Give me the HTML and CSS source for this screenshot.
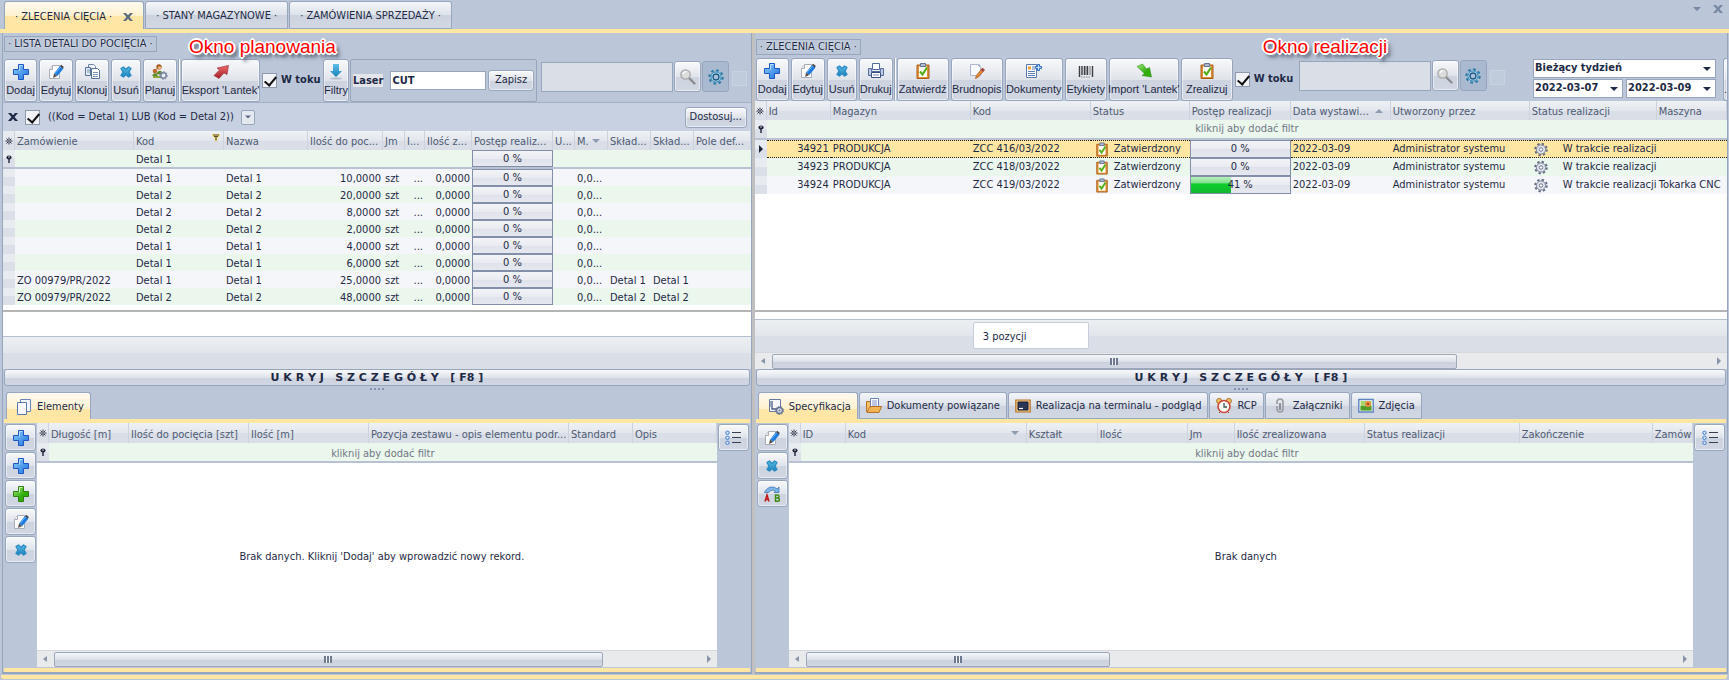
FILE: index.html
```html
<!DOCTYPE html>
<html lang="pl">
<head>
<meta charset="utf-8">
<title>Zlecenia cięcia</title>
<link rel="stylesheet" href="styles.css">
</head>
<body>
<svg class="sprite" aria-hidden="true">
  <defs>
    <linearGradient id="g-blue" x1="0" y1="0" x2="1" y2="1"><stop offset="0" stop-color="#8fd0f8"/><stop offset="1" stop-color="#1b6fe0"/></linearGradient>
    <linearGradient id="g-green" x1="0" y1="0" x2="1" y2="1"><stop offset="0" stop-color="#a5ea7c"/><stop offset=".6" stop-color="#2fae0c"/></linearGradient>
    <linearGradient id="g-cyan" x1="0" y1="0" x2="0" y2="1"><stop offset="0" stop-color="#5cc0ea"/><stop offset="1" stop-color="#1a7fb8"/></linearGradient>
    <linearGradient id="g-red" x1="0" y1="0" x2="0" y2="1"><stop offset="0" stop-color="#f06a6a"/><stop offset="1" stop-color="#a51f28"/></linearGradient>
  </defs>
  <symbol id="plus" viewBox="0 0 16 16"><path d="M5.500.5h5v5h5v5h-5v5h-5v-5h-5v-5h5z" fill="url(#g-blue)" stroke="#1c55c4"/><path d="M6.500 6.500v-5h3" fill="none" stroke="#b5e0fb"/></symbol>
  <symbol id="plus-green" viewBox="0 0 16 16"><path d="M5.500.5h5v5h5v5h-5v5h-5v-5h-5v-5h5z" fill="url(#g-green)" stroke="#2c7f10"/><path d="M6.500 6.500v-5h3" fill="none" stroke="#d2f7bf"/></symbol>
  <symbol id="edit" viewBox="0 0 16 16"><path d="M4.500 1.500h7v13h-10v-9z" fill="#fdfdfd" stroke="#a9adb5"/><path d="M1.500 5.500h3v-4" fill="#e6e8ec" stroke="#a9adb5"/><path d="M6 9.500 12 2l3.500 2.500-6.200 7.500z" fill="#1d7ae0"/><path d="M7 9.500 13 2.600" stroke="#6bb8fa"/><path d="m12 2 1.200-1.200 2.600 2.200-1 1.600z" fill="#47443f"/><path d="m6 9.500 3.300 2.500L5 14z" fill="#55514c"/></symbol>
  <symbol id="clone" viewBox="0 0 16 16"><path d="M4.500.5h5l2 2v8h-7z" fill="#f4f7fb" stroke="#6b86aa"/><path d="M1.500 3.500h5v8h-5z" fill="#e4ebf4" stroke="#56749c"/><path d="M7.500 4.500h6l2 2v8h-8z" fill="#fff" stroke="#56749c"/><path d="M9 8.500h5M9 10.500h5M9 12.500h5M3 6h3M3 8h3" stroke="#7793b8"/></symbol>
  <symbol id="cross" viewBox="0 0 16 16"><path d="M3 4.500 5.500 3 8 5.500 10.500 3 13 4.500 11 8l2 3.500-2.500 1.500L8 10.500 5.500 13 3 11.500 5 8z" fill="url(#g-cyan)" stroke="#2a8bc4" stroke-width="1.400" stroke-linejoin="round"/></symbol>
  <symbol id="plan" viewBox="0 0 16 16"><circle cx="7" cy="3" r="2.700" fill="#a55a22"/><circle cx="7.500" cy="4" r="1.800" fill="#eab57c"/><circle cx="3" cy="7" r="2.300" fill="#bf6a28"/><path d="M0 12q3-6 6 0zM4 10q4-7 8 1z" fill="#5d8a2c"/><path d="M1 12h8v2H1z" fill="#8aa636"/><circle cx="11.500" cy="11.500" r="2.700" fill="#e8ebf1" stroke="#77839c" stroke-width="1.500"/><circle cx="11.500" cy="11.500" r="4" fill="none" stroke="#8a95ab" stroke-dasharray="1.500 1.500"/></symbol>
  <symbol id="export" viewBox="0 0 16 16"><path d="M15.500 1.500 14 10.500l-3-1.500-5 5.500-5-3L6.500 6 4 4z" fill="url(#g-red)" stroke="#8f2a32" stroke-width=".6"/></symbol>
  <symbol id="import" viewBox="0 0 16 16"><path d="M1 3.500 6.500 1l4 5 3-1.500 2 9.500-9.500-1.500 2.500-2z" fill="url(#g-green)" stroke="#3b8f1d" stroke-width=".6"/></symbol>
  <symbol id="down" viewBox="0 0 16 16"><ellipse cx="8" cy="14.500" rx="6" ry="1" fill="#b5bccb"/><path d="M5 0h6v7h3l-6 6-6-6h3z" fill="url(#g-cyan)"/></symbol>
  <symbol id="search" viewBox="0 0 16 16"><path d="m9 9 5.500 5.500" stroke="#8b8d92" stroke-width="2.400" stroke-linecap="round"/><circle cx="5.500" cy="5.500" r="4.700" fill="#dcdcdc" stroke="#a9a9a9" stroke-width="1.300"/><path d="M3 5q1-2.500 3.500-2.500" fill="none" stroke="#fff" stroke-width="1.200"/></symbol>
  <symbol id="cog-blue" viewBox="0 0 16 16"><circle cx="8" cy="8" r="6.700" fill="none" stroke="#2478a5" stroke-width="2" stroke-dasharray="2.600 2.660"/><circle cx="8" cy="8" r="5" fill="#d4eff9" stroke="#2b86b5"/><circle cx="8" cy="8" r="3" fill="#aebfd8" stroke="#1a5a88" stroke-width="1.400"/></symbol>
  <symbol id="cog-gray" viewBox="0 0 16 16"><circle cx="8" cy="8" r="6.600" fill="none" stroke="#606a82" stroke-width="2.200" stroke-dasharray="2.600 2.580"/><circle cx="8" cy="8" r="5.200" fill="#e3e6ee" stroke="#69738c"/><circle cx="8" cy="8" r="2" fill="#fff" stroke="#59637c"/></symbol>
  <symbol id="print" viewBox="0 0 16 16"><path d="M4.500.5h7v6h-7z" fill="#fff" stroke="#536a9c"/><path d="M.5 5.500h3v3h9v-3h3v7H.5z" fill="#c2cde3" stroke="#536a9c"/><path d="M3.500 9.500h9v5h-9z" fill="#fff" stroke="#39507f"/><path d="M5 12h6" stroke="#7388b6"/></symbol>
  <symbol id="clip" viewBox="0 0 16 16"><path d="M2 2h12v13.500H2z" fill="#e08f35" stroke="#a95e18"/><path d="M4 3.500h8v10.500H4z" fill="#fffdf6"/><path d="M5.500.5h5v3h-5z" fill="#aebbd0" stroke="#647592"/><path d="m5 8.500 2.500 3L12 4.500" fill="none" stroke="#55ae1c" stroke-width="2.200"/></symbol>
  <symbol id="draft" viewBox="0 0 16 16"><path d="M1.500 1.500h7l3 3v8h-10z" fill="#f8f9fd" stroke="#b0b7cc"/><path d="m13.500 5 2 2-6 7-3 1.500.8-3z" fill="#e08a3a" stroke="#a35320" stroke-width=".7"/><path d="m13.500 5 2 2-1.500 1.800-2.200-1.800z" fill="#9c3f4e"/><path d="m9.500 1 2 2.500" stroke="#8aa0cc"/></symbol>
  <symbol id="docs" viewBox="0 0 16 16"><path d="M.5 1.500h10v13H.5z" fill="#fff" stroke="#5a78b0"/><path d="M2 3.500h3v3H2z" fill="#f0a030"/><path d="M6 4h3M6 6h3M2 8.500h7M2 10.500h7M2 12.500h7" stroke="#5d7fc0"/><path d="M11.500 1.500h2v2h2v2h-2v2h-2v-2h-2v-2h2z" fill="#bfe0fa" stroke="#2f67c0"/></symbol>
  <symbol id="bars" viewBox="0 0 16 16"><path d="M1.500 3v11M4 3v9M6.500 3v9M9.500 3v9M14.500 3v11" stroke="#3c3c44" stroke-width="1.400"/><path d="M12 3v9M8 3v9" stroke="#3c3c44" stroke-width=".7"/><path d="M3 14h10" stroke="#888" stroke-dasharray="1.500 1"/></symbol>
  <symbol id="pages" viewBox="0 0 16 16"><path d="M4.500.5h10v12h-10z" fill="#f2f5fc" stroke="#6c84b8"/><path d="M1.500 3.500h9v12h-9z" fill="#fdfdff" stroke="#5c76ad"/></symbol>
  <symbol id="spec" viewBox="0 0 16 16"><path d="M1.500.5h11v12h-11z" fill="#f6f8fc" stroke="#6678a0"/><path d="M4 2v8h6" fill="none" stroke="#4a5c86" stroke-width="1.300"/><path d="M2 3h1M2 5h1M2 7h1" stroke="#4a5c86"/><circle cx="11.500" cy="11.500" r="3" fill="#dfe4ef" stroke="#67748f" stroke-width="1.400"/><circle cx="11.500" cy="11.500" r="4" fill="none" stroke="#67748f" stroke-dasharray="1.400 1.400"/><circle cx="11.500" cy="11.500" r="1" fill="#67748f"/></symbol>
  <symbol id="folder" viewBox="0 0 16 16"><path d="M.5 3.500h4v10h-4z" fill="#f3c066" stroke="#b5712a"/><path d="M4.500.5h8v10h-8z" fill="#fff" stroke="#6b82b8"/><path d="M6 3h5M6 5h5M6 7h5" stroke="#7a93c8"/><path d="m1 14.500 3-6h11.500l-2.500 6z" fill="#f2b452" stroke="#b5712a"/></symbol>
  <symbol id="screen" viewBox="0 0 16 16"><path d="M.8 2h14.400v12H.8z" fill="#f3c987" stroke="#b9752b" stroke-width="1.200"/><path d="M3 4h10v8H3z" fill="#2b3554" stroke="#16203c"/><path d="M4 10.500h4" stroke="#fff" stroke-width="1.200"/></symbol>
  <symbol id="clock" viewBox="0 0 16 16"><circle cx="3.200" cy="3" r="2.600" fill="#f0c060" stroke="#a8762c"/><circle cx="12.800" cy="3" r="2.600" fill="#f0c060" stroke="#a8762c"/><path d="m3 15 2-2M13 15l-2-2" stroke="#a33"/><circle cx="8" cy="8.500" r="6" fill="#fbfbf5" stroke="#c8463c" stroke-width="1.600"/><path d="M8 5v4h3" fill="none" stroke="#3d5a55" stroke-width="1.300"/></symbol>
  <symbol id="paperclip" viewBox="0 0 16 16"><path d="M5 6V4a3 3 0 0 1 6 0v7a3 3 0 0 1-6 0V8" fill="none" stroke="#9b9da2" stroke-width="1.700"/><path d="M8 5v7" stroke="#7d7f85" stroke-width="1.700"/></symbol>
  <symbol id="photo" viewBox="0 0 16 16"><path d="M.8 1.500h14.400v12.500H.8z" fill="#fff" stroke="#5d83c0" stroke-width="1.400"/><path d="M2.500 3h11v9.500h-11z" fill="#a8d66e"/><path d="M2.500 8h11v4.500h-11z" fill="#4f9e2c"/><circle cx="10" cy="6" r="3" fill="#e98b3c"/><circle cx="10" cy="6" r="1" fill="#8b3a22"/></symbol>
  <symbol id="list" viewBox="0 0 16 16"><path d="M7 2.500h9M7 7.500h9M7 12.500h9" stroke="#3a3f4d" stroke-width="1.200"/><circle cx="2.500" cy="2.800" r="1.700" fill="#d4e6fb" stroke="#3f7bd0"/><circle cx="2.500" cy="7.800" r="1.700" fill="#d4e6fb" stroke="#3f7bd0"/><circle cx="2.500" cy="12.800" r="1.700" fill="#d4e6fb" stroke="#3f7bd0"/></symbol>
  <symbol id="swap" viewBox="0 0 16 16"><path d="M.5 6.500Q3 1 8 1q3 0 5 2l2-2v5.500h-5l1.500-1.500Q8 2.500 4.500 6.500z" fill="#7fb6e8" stroke="#3f73b0" stroke-width=".8"/><path d="m1 15.500 2-6.500 2 6.500M1.700 13.500h2.600" fill="none" stroke="#c01818" stroke-width="1.500"/><path d="M11.500 9h2q1.500 0 1.500 1.500T13.500 12q2 0 2 1.600t-2 1.600h-2zM11.500 12h2" fill="none" stroke="#3d8a12" stroke-width="1.400"/></symbol>
  <symbol id="star" viewBox="0 0 8 8"><path d="M4 .5v7M.5 4h7M1.500 1.500l5 5M6.500 1.500l-5 5" stroke="#1e2438" stroke-width=".9"/><circle cx="4" cy="4" r=".8" fill="#dfe3ec"/></symbol>
  <symbol id="pin" viewBox="0 0 8 8"><ellipse cx="4" cy="2.500" rx="2.600" ry="1.900" fill="#1e2438"/><path d="M4 3v5" stroke="#1e2438" stroke-width="1.400"/><path d="M3 2h2" stroke="#fff" stroke-width=".8"/></symbol>
  <symbol id="funnel" viewBox="0 0 8 8"><path d="M0 1h8v2L5.500 5v3h-3V5L0 3z" fill="#f3dc7e"/><path d="M1 2h6M2 3.500h4M4 3v4.500" stroke="#55502f" stroke-width="1.100"/></symbol>
  <symbol id="tri-down" viewBox="0 0 8 8"><path d="M0 2h8L4 6z"/></symbol>
  <symbol id="tri-up" viewBox="0 0 8 8"><path d="M0 6h8L4 2z"/></symbol>
  <symbol id="tri-left" viewBox="0 0 8 8"><path d="M6 1v6L2 4z"/></symbol>
  <symbol id="tri-right" viewBox="0 0 8 8"><path d="M2 0v8l4-4z"/></symbol>
  <symbol id="close" viewBox="0 0 10 8"><path d="M0 0h3l2 2.300L7 0h3L6.500 4 10 8H7L5 5.700 3 8H0l3.500-4z"/></symbol>
</svg>

<header class="doc-tabs">
  <button class="doc-tab doc-tab--active">· ZLECENIA CIĘCIA · <svg class="ic8 ic10"><use href="#close"/></svg></button>
  <button class="doc-tab">· STANY MAGAZYNOWE ·</button>
  <button class="doc-tab">· ZAMÓWIENIA SPRZEDAŻY ·</button>
  <div class="doc-tabs__tools"><svg class="ic8"><use href="#tri-down"/></svg><svg class="ic8 ic10"><use href="#close"/></svg></div>
</header>

<main class="panes">
  <section class="pane pane--left">
    <div class="pane__title"><h2>· LISTA DETALI DO POCIĘCIA ·</h2></div>
    <strong class="note">Okno planowania</strong>
    <div class="toolbar toolbar--lined">
      <button class="tool w33"><svg><use href="#plus"/></svg>Dodaj</button>
      <button class="tool w34"><svg><use href="#edit"/></svg>Edytuj</button>
      <button class="tool w34"><svg><use href="#clone"/></svg>Klonuj</button>
      <button class="tool w30"><svg><use href="#cross"/></svg>Usuń</button>
      <button class="tool w34"><svg><use href="#plan"/></svg>Planuj</button>
      <i class="sep"></i>
      <button class="tool w79"><svg><use href="#export"/></svg>Eksport 'Lantek'</button>
      <label class="check check--toku"><input type="checkbox" checked><b>W toku</b></label>
      <button class="tool w26"><svg><use href="#down"/></svg>Filtry</button>
      <div class="laser">
        <label for="laser">Laser</label>
        <input id="laser" class="field" value="CUT">
        <button class="btn">Zapisz</button>
      </div>
      <input class="field field--search" aria-label="Szukaj">
      <button class="icon-btn" aria-label="Szukaj"><svg><use href="#search"/></svg></button>
      <button class="icon-btn icon-btn--on" aria-label="Ustawienia"><svg><use href="#cog-blue"/></svg></button>
      <i class="ghost"></i>
    </div>
    <div class="filterbar">
      <button class="plain" aria-label="Usuń filtr"><svg class="ic8 ic10"><use href="#close"/></svg></button>
      <label class="check"><input type="checkbox" checked><span>((Kod = Detal 1) LUB (Kod = Detal 2))</span></label>
      <button class="drop" aria-label="Rozwiń"><svg class="ic8"><use href="#tri-down"/></svg></button>
      <button class="btn filterbar__custom">Dostosuj...</button>
    </div>
    <div class="grid-area grid-area--left">
      <table class="grid">
        <colgroup><col class="c12"><col class="c119"><col class="c90"><col class="c84"><col class="c75"><col class="c22"><col class="c20"><col class="c47"><col class="c81"><col class="c22"><col class="c33"><col class="c43"><col class="c43"><col></colgroup>
        <thead>
          <tr><th class="ind"><svg><use href="#star"/></svg></th><th>Zamówienie</th><th>Kod<svg class="th-ic th-ic--top"><use href="#funnel"/></svg></th><th>Nazwa</th><th>Ilość do poc...</th><th>Jm</th><th>I...</th><th>Ilość z...</th><th>Postęp realiz...</th><th>U...</th><th>M.<svg class="th-ic"><use href="#tri-down"/></svg></th><th>Skład...</th><th>Skład...</th><th>Pole def...</th></tr>
        </thead>
        <tbody>
          <tr class="filter"><td class="ind"><svg><use href="#pin"/></svg></td><td></td><td>Detal 1</td><td></td><td></td><td></td><td></td><td></td><td class="bar"><div>0 %</div></td><td></td><td></td><td></td><td></td><td></td></tr>
          <tr><td class="ind"></td><td></td><td>Detal 1</td><td>Detal 1</td><td class="num">10,0000</td><td>szt</td><td class="num">...</td><td class="num">0,0000</td><td class="bar"><div>0 %</div></td><td></td><td>0,0...</td><td></td><td></td><td></td></tr>
          <tr class="alt"><td class="ind"></td><td></td><td>Detal 2</td><td>Detal 2</td><td class="num">20,0000</td><td>szt</td><td class="num">...</td><td class="num">0,0000</td><td class="bar"><div>0 %</div></td><td></td><td>0,0...</td><td></td><td></td><td></td></tr>
          <tr><td class="ind"></td><td></td><td>Detal 2</td><td>Detal 2</td><td class="num">8,0000</td><td>szt</td><td class="num">...</td><td class="num">0,0000</td><td class="bar"><div>0 %</div></td><td></td><td>0,0...</td><td></td><td></td><td></td></tr>
          <tr class="alt"><td class="ind"></td><td></td><td>Detal 2</td><td>Detal 2</td><td class="num">2,0000</td><td>szt</td><td class="num">...</td><td class="num">0,0000</td><td class="bar"><div>0 %</div></td><td></td><td>0,0...</td><td></td><td></td><td></td></tr>
          <tr><td class="ind"></td><td></td><td>Detal 1</td><td>Detal 1</td><td class="num">4,0000</td><td>szt</td><td class="num">...</td><td class="num">0,0000</td><td class="bar"><div>0 %</div></td><td></td><td>0,0...</td><td></td><td></td><td></td></tr>
          <tr class="alt"><td class="ind"></td><td></td><td>Detal 1</td><td>Detal 1</td><td class="num">6,0000</td><td>szt</td><td class="num">...</td><td class="num">0,0000</td><td class="bar"><div>0 %</div></td><td></td><td>0,0...</td><td></td><td></td><td></td></tr>
          <tr><td class="ind"></td><td>ZO 00979/PR/2022</td><td>Detal 1</td><td>Detal 1</td><td class="num">25,0000</td><td>szt</td><td class="num">...</td><td class="num">0,0000</td><td class="bar"><div>0 %</div></td><td></td><td>0,0...</td><td>Detal 1</td><td>Detal 1</td><td></td></tr>
          <tr class="alt"><td class="ind"></td><td>ZO 00979/PR/2022</td><td>Detal 2</td><td>Detal 2</td><td class="num">48,0000</td><td>szt</td><td class="num">...</td><td class="num">0,0000</td><td class="bar"><div>0 %</div></td><td></td><td>0,0...</td><td>Detal 2</td><td>Detal 2</td><td></td></tr>
        </tbody>
      </table>
    </div>
    <div class="grid-foot grid-foot--left"></div>
    <button class="toggle">U K R Y J   S Z C Z E G Ó Ł Y   [ F8 ]</button>
    <div class="grip"></div>
    <div class="tabs"><button class="tab tab--active"><svg><use href="#pages"/></svg>Elementy</button></div>
    <div class="detail">
      <div class="side">
        <button class="side__btn" aria-label="Dodaj"><svg><use href="#plus"/></svg></button>
        <button class="side__btn" aria-label="Dodaj element"><svg><use href="#plus"/></svg></button>
        <button class="side__btn" aria-label="Dodaj wiele"><svg><use href="#plus-green"/></svg></button>
        <button class="side__btn" aria-label="Edytuj"><svg><use href="#edit"/></svg></button>
        <button class="side__btn" aria-label="Usuń"><svg><use href="#cross"/></svg></button>
      </div>
      <div class="detail__grid">
        <table class="grid grid--tall">
          <colgroup><col class="c12"><col class="c80"><col class="c120"><col class="c120"><col class="c200"><col class="c64"><col></colgroup>
          <thead><tr><th class="ind"><svg><use href="#star"/></svg></th><th>Długość [m]</th><th>Ilość do pocięcia [szt]</th><th>Ilość [m]</th><th>Pozycja zestawu - opis elementu podr...</th><th>Standard</th><th>Opis</th></tr></thead>
          <tbody><tr class="filter"><td class="ind"><svg><use href="#pin"/></svg></td><td class="hint" colspan="6">kliknij aby dodać filtr</td></tr></tbody>
        </table>
        <p class="empty">Brak danych. Kliknij 'Dodaj' aby wprowadzić nowy rekord.</p>
        <div class="scroll"><svg class="ic8"><use href="#tri-left"/></svg><div class="scroll__track"><div class="scroll__thumb" style="width:85%"><i></i></div></div><svg class="ic8"><use href="#tri-right"/></svg></div>
      </div>
      <div class="side side--right"><button class="side__btn" aria-label="Kolumny"><svg><use href="#list"/></svg></button></div>
    </div>
  </section>

  <section class="pane pane--right">
    <div class="pane__title"><h2>· ZLECENIA CIĘCIA ·</h2></div>
    <strong class="note">Okno realizacji</strong>
    <div class="toolbar">
      <button class="tool w33"><svg><use href="#plus"/></svg>Dodaj</button>
      <button class="tool w34"><svg><use href="#edit"/></svg>Edytuj</button>
      <button class="tool w30"><svg><use href="#cross"/></svg>Usuń</button>
      <button class="tool w34"><svg><use href="#print"/></svg>Drukuj</button>
      <i class="sep"></i>
      <button class="tool w52"><svg><use href="#clip"/></svg>Zatwierdź</button>
      <button class="tool w52"><svg><use href="#draft"/></svg>Brudnopis</button>
      <button class="tool w58"><svg><use href="#docs"/></svg>Dokumenty</button>
      <button class="tool w42"><svg><use href="#bars"/></svg>Etykiety</button>
      <button class="tool w70"><svg><use href="#import"/></svg>Import 'Lantek'</button>
      <button class="tool w52"><svg><use href="#clip"/></svg>Zrealizuj</button>
      <label class="check check--toku"><input type="checkbox" checked><b>W toku</b></label>
      <input class="field field--search" aria-label="Szukaj">
      <button class="icon-btn" aria-label="Szukaj"><svg><use href="#search"/></svg></button>
      <button class="icon-btn icon-btn--on" aria-label="Ustawienia"><svg><use href="#cog-blue"/></svg></button>
      <i class="ghost"></i>
      <div class="period">
        <div class="pick pick--wide"><select aria-label="Okres"><option>Bieżący tydzień</option></select><svg class="ic8"><use href="#tri-down"/></svg></div>
        <div class="pick"><select aria-label="Od"><option>2022-03-07</option></select><svg class="ic8"><use href="#tri-down"/></svg></div>
        <div class="pick"><select aria-label="Do"><option>2022-03-09</option></select><svg class="ic8"><use href="#tri-down"/></svg></div>
      </div>
      <button class="tool tool--more" aria-label="Więcej">.</button>
    </div>
    <div class="grid-area grid-area--right">
      <table class="grid grid--roomy">
        <colgroup><col class="c12"><col class="c64"><col class="c140"><col class="c120"><col class="c99"><col class="c101"><col class="c100"><col class="c139"><col class="c127"><col></colgroup>
        <thead>
          <tr><th class="ind"><svg><use href="#star"/></svg></th><th>Id</th><th>Magazyn</th><th>Kod</th><th>Status</th><th>Postęp realizacji</th><th>Data wystawi...<svg class="th-ic"><use href="#tri-up"/></svg></th><th>Utworzony przez</th><th>Status realizacji</th><th>Maszyna</th></tr>
        </thead>
        <tbody>
          <tr class="filter"><td class="ind"><svg><use href="#pin"/></svg></td><td class="hint" colspan="9">kliknij aby dodać filtr</td></tr>
          <tr class="sel"><td class="ind"><svg><use href="#tri-right"/></svg></td><td class="num">34921</td><td>PRODUKCJA</td><td>ZCC 416/03/2022</td><td><span class="state"><svg><use href="#clip"/></svg>Zatwierdzony</span></td><td class="bar"><div>0 %</div></td><td>2022-03-09</td><td>Administrator systemu</td><td><span class="state state--wide"><svg><use href="#cog-gray"/></svg>W trakcie realizacji</span></td><td></td></tr>
          <tr class="alt"><td class="ind"></td><td class="num">34923</td><td>PRODUKCJA</td><td>ZCC 418/03/2022</td><td><span class="state"><svg><use href="#clip"/></svg>Zatwierdzony</span></td><td class="bar"><div>0 %</div></td><td>2022-03-09</td><td>Administrator systemu</td><td><span class="state state--wide"><svg><use href="#cog-gray"/></svg>W trakcie realizacji</span></td><td></td></tr>
          <tr><td class="ind"></td><td class="num">34924</td><td>PRODUKCJA</td><td>ZCC 419/03/2022</td><td><span class="state"><svg><use href="#clip"/></svg>Zatwierdzony</span></td><td class="bar"><div><i style="width:41%"></i><span>41 %</span></div></td><td>2022-03-09</td><td>Administrator systemu</td><td><span class="state state--wide"><svg><use href="#cog-gray"/></svg>W trakcie realizacji</span></td><td>Tokarka CNC</td></tr>
        </tbody>
      </table>
    </div>
    <div class="grid-foot grid-foot--right"><output class="count">3 pozycji</output></div>
    <div class="scroll"><svg class="ic8"><use href="#tri-left"/></svg><div class="scroll__track"><div class="scroll__thumb" style="width:73%"><i></i></div></div><svg class="ic8"><use href="#tri-right"/></svg></div>
    <button class="toggle">U K R Y J   S Z C Z E G Ó Ł Y   [ F8 ]</button>
    <div class="grip"></div>
    <div class="tabs">
      <button class="tab tab--active"><svg><use href="#spec"/></svg>Specyfikacja</button>
      <button class="tab"><svg><use href="#folder"/></svg>Dokumenty powiązane</button>
      <button class="tab"><svg><use href="#screen"/></svg>Realizacja na terminalu - podgląd</button>
      <button class="tab"><svg><use href="#clock"/></svg>RCP</button>
      <button class="tab"><svg><use href="#paperclip"/></svg>Załączniki</button>
      <button class="tab"><svg><use href="#photo"/></svg>Zdjęcia</button>
    </div>
    <div class="detail">
      <div class="side">
        <button class="side__btn" aria-label="Edytuj"><svg><use href="#edit"/></svg></button>
        <button class="side__btn" aria-label="Usuń"><svg><use href="#cross"/></svg></button>
        <button class="side__btn" aria-label="Zamień"><svg><use href="#swap"/></svg></button>
      </div>
      <div class="detail__grid">
        <table class="grid grid--tall">
          <colgroup><col class="c12"><col class="c45"><col class="c181"><col class="c71"><col class="c90"><col class="c47"><col class="c130"><col class="c155"><col class="c133"><col></colgroup>
          <thead><tr><th class="ind"><svg><use href="#star"/></svg></th><th>ID</th><th>Kod<svg class="th-ic"><use href="#tri-down"/></svg></th><th>Kształt</th><th>Ilość</th><th>Jm</th><th>Ilość zrealizowana</th><th>Status realizacji</th><th>Zakończenie</th><th class="last">Zamówi</th></tr></thead>
          <tbody><tr class="filter"><td class="ind"><svg><use href="#pin"/></svg></td><td class="hint" colspan="9">kliknij aby dodać filtr</td></tr></tbody>
        </table>
        <p class="empty">Brak danych</p>
        <div class="scroll"><svg class="ic8"><use href="#tri-left"/></svg><div class="scroll__track"><div class="scroll__thumb" style="width:35%"><i></i></div></div><svg class="ic8"><use href="#tri-right"/></svg></div>
      </div>
      <div class="side side--right"><button class="side__btn" aria-label="Kolumny"><svg><use href="#list"/></svg></button></div>
    </div>
  </section>
</main>
<footer class="doc-foot"></footer>
</body>
</html>
```
FILE: styles.css
```css
:root {
  --bg: #bbc7d8;
  --line: #98a6bd;
  --accent: #ffe6a2;
  --ink: #1e2a45;
  --muted: #4e5a73;
  --face: linear-gradient(#f8f9fb, #dfe3ea 50%, #cdd3df 51%, #d0d6e2);
}
* { box-sizing: border-box; }
body {
  margin: 0;
  min-height: 100vh;
  display: flex;
  flex-direction: column;
  background: var(--bg);
  color: var(--ink);
  font: 11px/16px "DejaVu Sans Condensed", "DejaVu Sans", sans-serif;
}
button, input, select { font: inherit; color: inherit; }
button { padding: 0; white-space: nowrap; }
svg { flex: none; width: 16px; height: 16px; }
.sprite { position: absolute; width: 0; height: 0; }
.ic8 { width: 8px; height: 8px; fill: #5e6b82; }
.ic10 { width: 10px; height: 8px; }

/* document tabs */
.doc-tabs {
  display: flex;
  gap: 1px;
  height: 33px;
  padding: 1px 3px 0 4px;
  border-bottom: 4px solid var(--accent);
}
.doc-tab {
  border: 1px solid var(--line);
  border-radius: 3px 3px 0 0;
  background: linear-gradient(#f4f6f9, #dde2ea 50%, #ccd3df 51%, #d2d8e3);
  padding: 2px 10px 0;
}
.doc-tab--active {
  display: flex;
  align-items: center;
  gap: 11px;
  padding: 2px 10px 0 10px;
  border-bottom: 0;
  background: linear-gradient(#fffaf0, #fff2d0 50%, #ffe6a8 51%, var(--accent));
}
.doc-tabs__tools {
  display: flex;
  gap: 12px;
  margin-left: auto;
  padding: 4px 3px;
}
.doc-tabs__tools svg { fill: #7787a3; }

/* panes */
.panes { flex: 1; display: flex; padding-left: 2px; }
.pane {
  position: relative;
  display: flex;
  flex-direction: column;
  min-width: 0;
  border-left: 1px solid var(--line);
  border-right: 1px solid var(--line);
  border-bottom: 2px solid var(--line);
}
.pane--left { flex: 749 1 0; }
.pane--right { flex: 974 1 0; margin-left: 3px; margin-right: 1px; border-left: 0; box-shadow: -3px 0 #c0c0c0; }
.pane__title { padding: 3px 1px 0; height: 25px; }
.pane--right .pane__title { padding-top: 6px; height: 24px; }
.pane__title h2 {
  display: inline-block;
  margin: 0;
  padding: 0 3px;
  border: 1px solid var(--line);
  font: inherit;
  line-height: 14px;
  text-shadow: 0 0 2px #fff;
}
.note {
  position: absolute;
  z-index: 1;
  left: 186px;
  top: 2px;
  color: #f00;
  font: 19px/24px "Liberation Sans", Arial, sans-serif;
  text-shadow: -1px -1px #fff, 1px -1px #fff, -1px 1px #fff, 1px 1px #fff, 2px 0 #fff, -2px 0 #fff, 0 2px #fff, 0 -2px #fff, 3px 4px 3px #5a6478, 4px 4px 5px #5a6478;
}
.pane--right .note { left: 508px; }

/* toolbars */
.toolbar {
  display: flex;
  align-items: center;
  height: 44px;
}
.toolbar--lined { height: 45px; border-bottom: 1px solid #a3b0c5; }
.tool, .btn, .icon-btn, .side__btn {
  border: 1px solid var(--line);
  border-radius: 3px;
  background: var(--face);
  box-shadow: inset 0 0 0 1px #ffffff80;
}
.tool {
  flex: none;
  display: flex;
  flex-direction: column;
  align-items: center;
  justify-content: space-between;
  height: 43px;
  margin: 0 1px;
  padding: 4px 0 3px;
  font: 11px/16px "Liberation Sans", Arial, sans-serif;
}
.w26 { width: 26px; }
.w30 { width: 30px; }
.w33 { width: 33px; }
.w34 { width: 34px; }
.w42 { width: 42px; }
.w52 { width: 52px; }
.w58 { width: 58px; }
.w70 { width: 70px; }
.w79 { width: 79px; }
.sep { flex: none; width: 2px; height: 42px; background: #fff; border-left: 1px solid var(--line); }
.check { display: flex; align-items: center; gap: 4px; white-space: nowrap; }
.check--toku { flex: none; width: 60px; margin-left: 1px; }
.check input {
  appearance: none;
  flex: none;
  position: relative;
  width: 15px;
  height: 15px;
  margin: 0;
  border: 1px solid #8e99ad;
  background: #f1f3f7;
}
.check input:checked::after {
  content: "";
  position: absolute;
  left: 4px;
  top: 0;
  width: 5px;
  height: 10px;
  border: solid #111;
  border-width: 0 2px 2px 0;
  transform: rotate(40deg);
}
.laser {
  display: flex;
  align-items: center;
  height: 43px;
  width: 187px;
  padding: 0 2px;
  border: 1px solid var(--line);
  border-radius: 2px;
}
.laser label { background: #e4e5ea; line-height: 13px; margin-right: 7px; font-weight: bold; }
.field {
  width: 94px;
  height: 19px;
  padding: 0 1px;
  border: 1px solid var(--line);
  border-radius: 0;
  background: #fff;
  font-weight: bold;
}
.laser .field { flex: 1; min-width: 0; }
.btn { height: 21px; width: 46px; margin-left: 2px; }
.field--search { align-self: flex-start; width: 132px; height: 30px; margin: 4px 0 0 4px; background: #dadee6; }
.icon-btn {
  align-self: flex-start;
  display: grid;
  place-items: center;
  flex: none;
  width: 27px;
  height: 31px;
  margin: 3px 0 0 1px;
}
.icon-btn--on { background: #a9b9d0; box-shadow: none; }
.ghost { flex: none; width: 15px; height: 15px; margin: 0 0 3px 3px; border: 1px solid #c9d2e1; background: #c0cbdc; }
.period {
  display: grid;
  grid-template-columns: 90px 90px;
  gap: 1px 3px;
  margin-left: auto;
  margin-bottom: 2px;
}
.pick { position: relative; height: 19px; }
.pick--wide { grid-column: span 2; }
.pick select {
  appearance: none;
  width: 100%;
  height: 19px;
  padding: 0 1px;
  border: 1px solid var(--line);
  border-radius: 0;
  background: #fff;
  font-weight: bold;
}
.pick svg { position: absolute; right: 5px; top: 6px; fill: var(--ink); }
.tool--more { width: 4px; margin: 0 0 0 7px; border-right: 0; border-radius: 3px 0 0 3px; justify-content: end; }

.filterbar {
  display: flex;
  align-items: center;
  gap: 7px;
  height: 28px;
  padding: 0 4px 0 5px;
  background: #c8d1e2;
}
.filterbar .check { gap: 8px; }
.plain { border: 0; background: none; line-height: 8px; }
.plain svg { fill: var(--ink); }
.drop { display: grid; place-items: center; width: 14px; height: 15px; border: 1px solid var(--line); border-radius: 2px; background: #e4e8ef; }
.drop svg { width: 6px; }
.filterbar .btn { margin-left: auto; width: 62px; }

/* data grids */
.grid-area { background: #fff; overflow: hidden; border-bottom: 2px solid #b4b4b4; }
.grid-area--left { height: 181px; }
.grid-area--right { height: 211px; }
.grid { width: 100%; table-layout: fixed; border-spacing: 0; }
.grid th, .grid td {
  height: 17px;
  padding: 2px 2px 0;
  line-height: 15px;
  overflow: hidden;
  white-space: nowrap;
  text-align: left;
}
.grid th {
  position: relative;
  height: 19px;
  border-right: 1px solid #cdd3de;
  background: linear-gradient(#eef1f4, #e3e7ed 50%, #d9dee7 51%, #d9dee7);
  color: var(--muted);
  font-weight: normal;
}
.grid--tall th { height: 20px; }
.grid--roomy td { height: 18px; padding-top: 0; line-height: 18px; }
.grid .ind { padding: 0; text-align: center; background: linear-gradient(#e8ebf0 50%, #dadfe8 50%); }
.ind svg { display: block; width: 8px; height: 8px; margin: 0 auto; fill: #1e2438; }
.th-ic { position: absolute; right: 7px; top: 6px; width: 8px; height: 8px; fill: #8f9bb0; }
.th-ic--top { right: 3px; top: 2px; }
.grid td { background: #f5f6f9; }
.grid .alt td:not(.ind), .grid .filter td:not(.ind) { background: #ebf6ed; }
.grid .filter td { border-bottom: 2px solid #b8c2d2; height: 19px; }
.grid--roomy .filter td { height: 20px; }
.grid--tall .filter td { height: 20px; }
.grid .sel td:not(.ind) { background: #ffe6a2; border-top: 1px dotted #222; border-bottom: 1px dotted #222; line-height: 16px; }
.grid .num { text-align: right; }
.grid .hint { text-align: center; color: #6f7684; }
.grid .bar { padding: 0; border-right: 0; border-left: 0; }
.grid .sel .bar.bar { border: 0; }
.bar div {
  position: relative;
  height: 17px;
  border: 1px solid #838fa8;
  background: linear-gradient(#f3f4f7, #e9ebf1 50%, #dfe2ea 51%, #e6e8f0);
  line-height: 16px;
  text-align: center;
}
.grid--roomy .bar div { height: 18px; }
.bar i { position: absolute; left: 0; top: 0; height: 100%; background: linear-gradient(#b5f0bb, #7fe08a 40%, #0bcf2b 41%, #12b832); }
.bar span { position: relative; }
.state { display: flex; align-items: center; gap: 5px; padding-left: 2px; height: 16px; }
.state svg { width: 14px; height: 15px; }
.state--wide { gap: 15px; }
.grid-foot {
  background: linear-gradient(#eceff2, #e2e6ec 50%, #d9dee7 51%);
  border-top: 1px solid #b4bfcf;
}
.grid-foot--left { height: 33px; margin-top: 24px; box-shadow: 0 -24px #fff; }
.grid-foot--right { height: 33px; margin-top: 7px; box-shadow: 0 -7px #fff; padding: 2px 0 0 218px; }
.count { display: block; width: 116px; height: 27px; padding: 0 9px; border: 1px solid #c6cedb; border-radius: 2px; background: #fff; line-height: 27px; }

.toggle {
  height: 17px;
  margin: 0 1px;
  border: 1px solid var(--line);
  border-radius: 3px;
  background: var(--face);
  font-family: "DejaVu Sans", sans-serif;
  font-weight: bold;
  line-height: 14px;
  white-space: pre;
}
.grip { width: 14px; height: 2px; margin: 2px auto; background: repeating-linear-gradient(90deg, #8593b0 0 2px, transparent 2px 4px); }

/* lower tabs */
.tabs { display: flex; gap: 1px; height: 31px; margin: 0 1px; padding: 0 2px; border-bottom: 4px solid var(--accent); }
.tab {
  display: flex;
  align-items: center;
  gap: 5px;
  padding: 0 6px;
  border: 1px solid var(--line);
  border-radius: 3px 3px 0 0;
  background: linear-gradient(#f3f5f8, #dde2ea 50%, #ccd3df 51%, #d2d8e3);
}
.tab--active { padding: 2px 6px 0 9px; border-bottom: 0; background: linear-gradient(#fffaf0, #fff2d0 60%, #ffe6a8 61%, var(--accent)); }

.detail { flex: 1; display: flex; margin: 0 1px; border-bottom: 4px solid var(--accent); padding-bottom: 1px; }
.side { flex: none; width: 33px; padding: 1px 1px 0; }
.side__btn { display: grid; place-items: center; width: 31px; height: 27px; margin-bottom: 1px; }
.detail__grid { flex: 1; min-width: 0; display: flex; flex-direction: column; background: #fff; }
.empty { flex: 1; display: grid; place-items: center; margin: 0; padding-left: 10px; }

.scroll { display: flex; align-items: center; gap: 5px; height: 17px; padding: 0 4px; border-top: 1px solid #d5d9df; background: #e9eaec; }
.scroll svg { fill: #8a94a8; }
.scroll__track { flex: 1; }
.scroll__thumb { display: grid; place-items: center; height: 15px; border: 1px solid #9da7b8; border-radius: 2px; background: linear-gradient(#f4f6f9, #dde2ea 50%, #cbd2de 51%, #d0d7e2); }
.scroll__thumb i { width: 8px; height: 7px; background: repeating-linear-gradient(90deg, #6d7990 0 2px, #f2f4f8 2px 3px); }

.doc-foot { height: 4px; margin: 1px 2px 1px 1px; border-radius: 0 0 3px 3px; background: var(--accent); }

.c12 { width: 12px; }
.c20 { width: 20px; }
.c22 { width: 22px; }
.c33 { width: 33px; }
.c43 { width: 43px; }
.c45 { width: 45px; }
.c47 { width: 47px; }
.c64 { width: 64px; }
.c71 { width: 71px; }
.c75 { width: 75px; }
.c80 { width: 80px; }
.c81 { width: 81px; }
.c84 { width: 84px; }
.c90 { width: 90px; }
.c99 { width: 99px; }
.c100 { width: 100px; }
.c101 { width: 101px; }
.c119 { width: 119px; }
.c120 { width: 120px; }
.c127 { width: 127px; }
.c130 { width: 130px; }
.c133 { width: 133px; }
.c139 { width: 139px; }
.c140 { width: 140px; }
.c155 { width: 155px; }
.c181 { width: 181px; }
.c200 { width: 200px; }
```
